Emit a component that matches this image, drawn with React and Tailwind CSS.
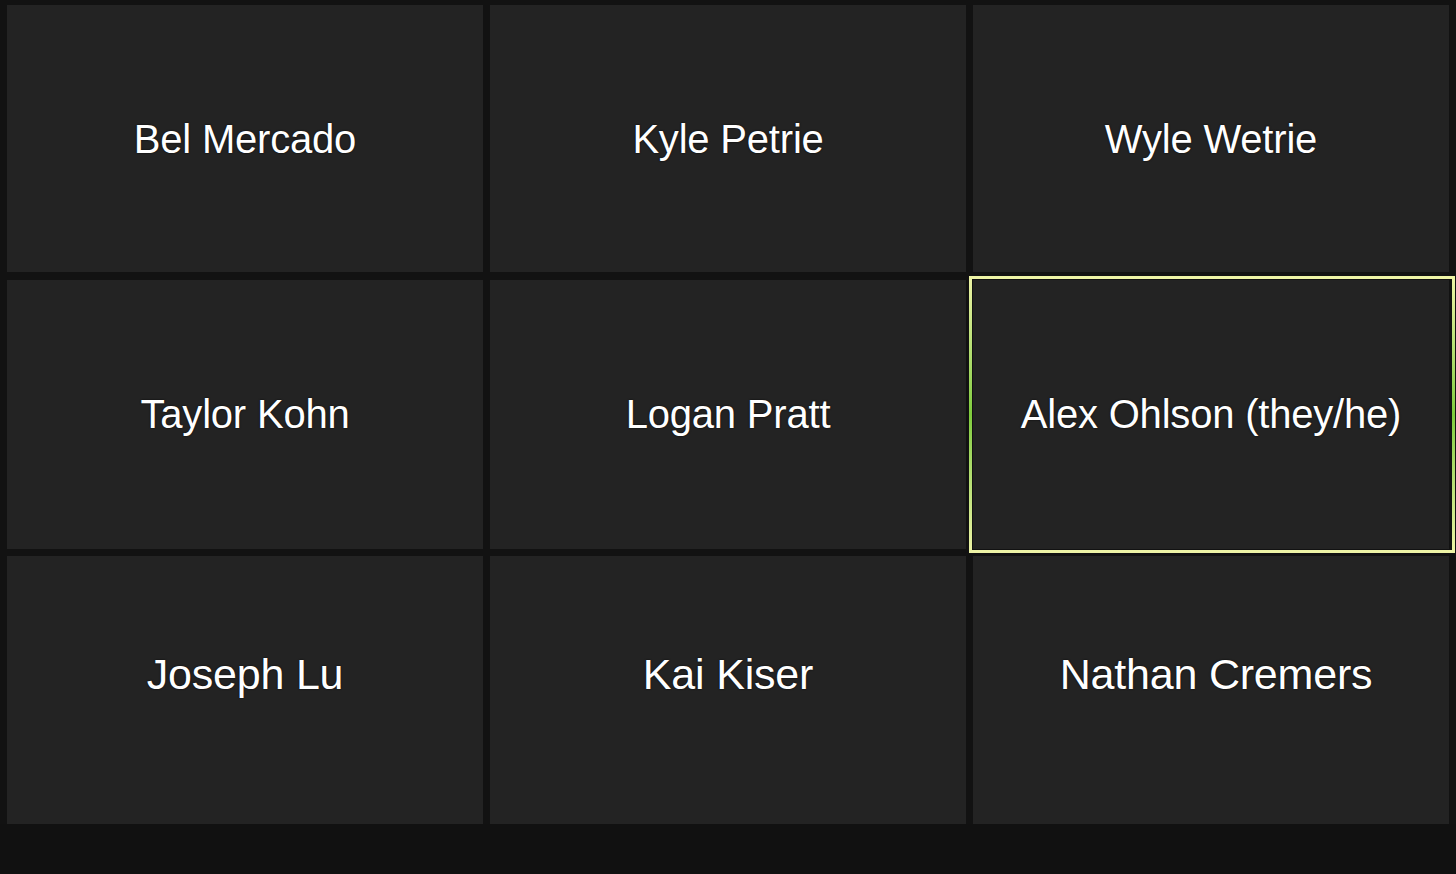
const people = [
  { name: "Bel Mercado" },
  { name: "Kyle Petrie" },
  { name: "Wyle Wetrie" },
  { name: "Taylor Kohn" },
  { name: "Logan Pratt" },
  { name: "Alex Ohlson (they/he)", active: true },
  { name: "Joseph Lu", low: true },
  { name: "Kai Kiser", low: true },
  { name: "Nathan Cremers", low: true, shift: true },
];

const Tile = ({ person }) => {
  return (
    <div
      className={`relative flex items-center justify-center bg-[#232323] ${
        person.low ? "pb-[32px]" : ""
      } ${person.shift ? "pl-[10px]" : ""}`}
    >
      <span
        className={`${
          person.low ? "text-[43px]" : "text-[40px]"
        } leading-none text-white tracking-[-0.2px] [text-shadow:0_0_2px_rgba(0,0,0,0.9)]`}
      >
        {person.name}
      </span>

      {/* active speaker frame */}
      {person.active && (
        <div className="absolute -top-[4px] -bottom-[4px] -left-[4px] -right-[6px] pointer-events-none">
          <div className="absolute top-0 left-0 right-0 h-[3px] bg-[#eef4a6]" />
          <div className="absolute bottom-0 left-0 right-0 h-[3px] bg-[#eef4a6]" />
          <div className="absolute top-0 bottom-0 left-0 w-[3px] bg-gradient-to-b from-[#eef4a6] via-[#7fcc3c] to-[#eef4a6]" />
          <div className="absolute top-0 bottom-0 right-0 w-[3px] bg-gradient-to-b from-[#eef4a6] via-[#7fcc3c] to-[#eef4a6]" />
        </div>
      )}
    </div>
  );
};

const App = () => {
  return (
    <div className="h-[874px] w-[1456px] bg-[#121212] flex flex-col overflow-hidden font-['Liberation_Sans',Arial,sans-serif]">
      <div className="grid grid-cols-3 grid-rows-[267px_269px_268px] gap-x-[7px] gap-y-[7.5px] px-[7px] pt-[5px]">
        {people.map((p) => (
          <Tile key={p.name} person={p} />
        ))}
      </div>
      <div className="flex-1 bg-[#111111]" />
    </div>
  );
};

export default App;
